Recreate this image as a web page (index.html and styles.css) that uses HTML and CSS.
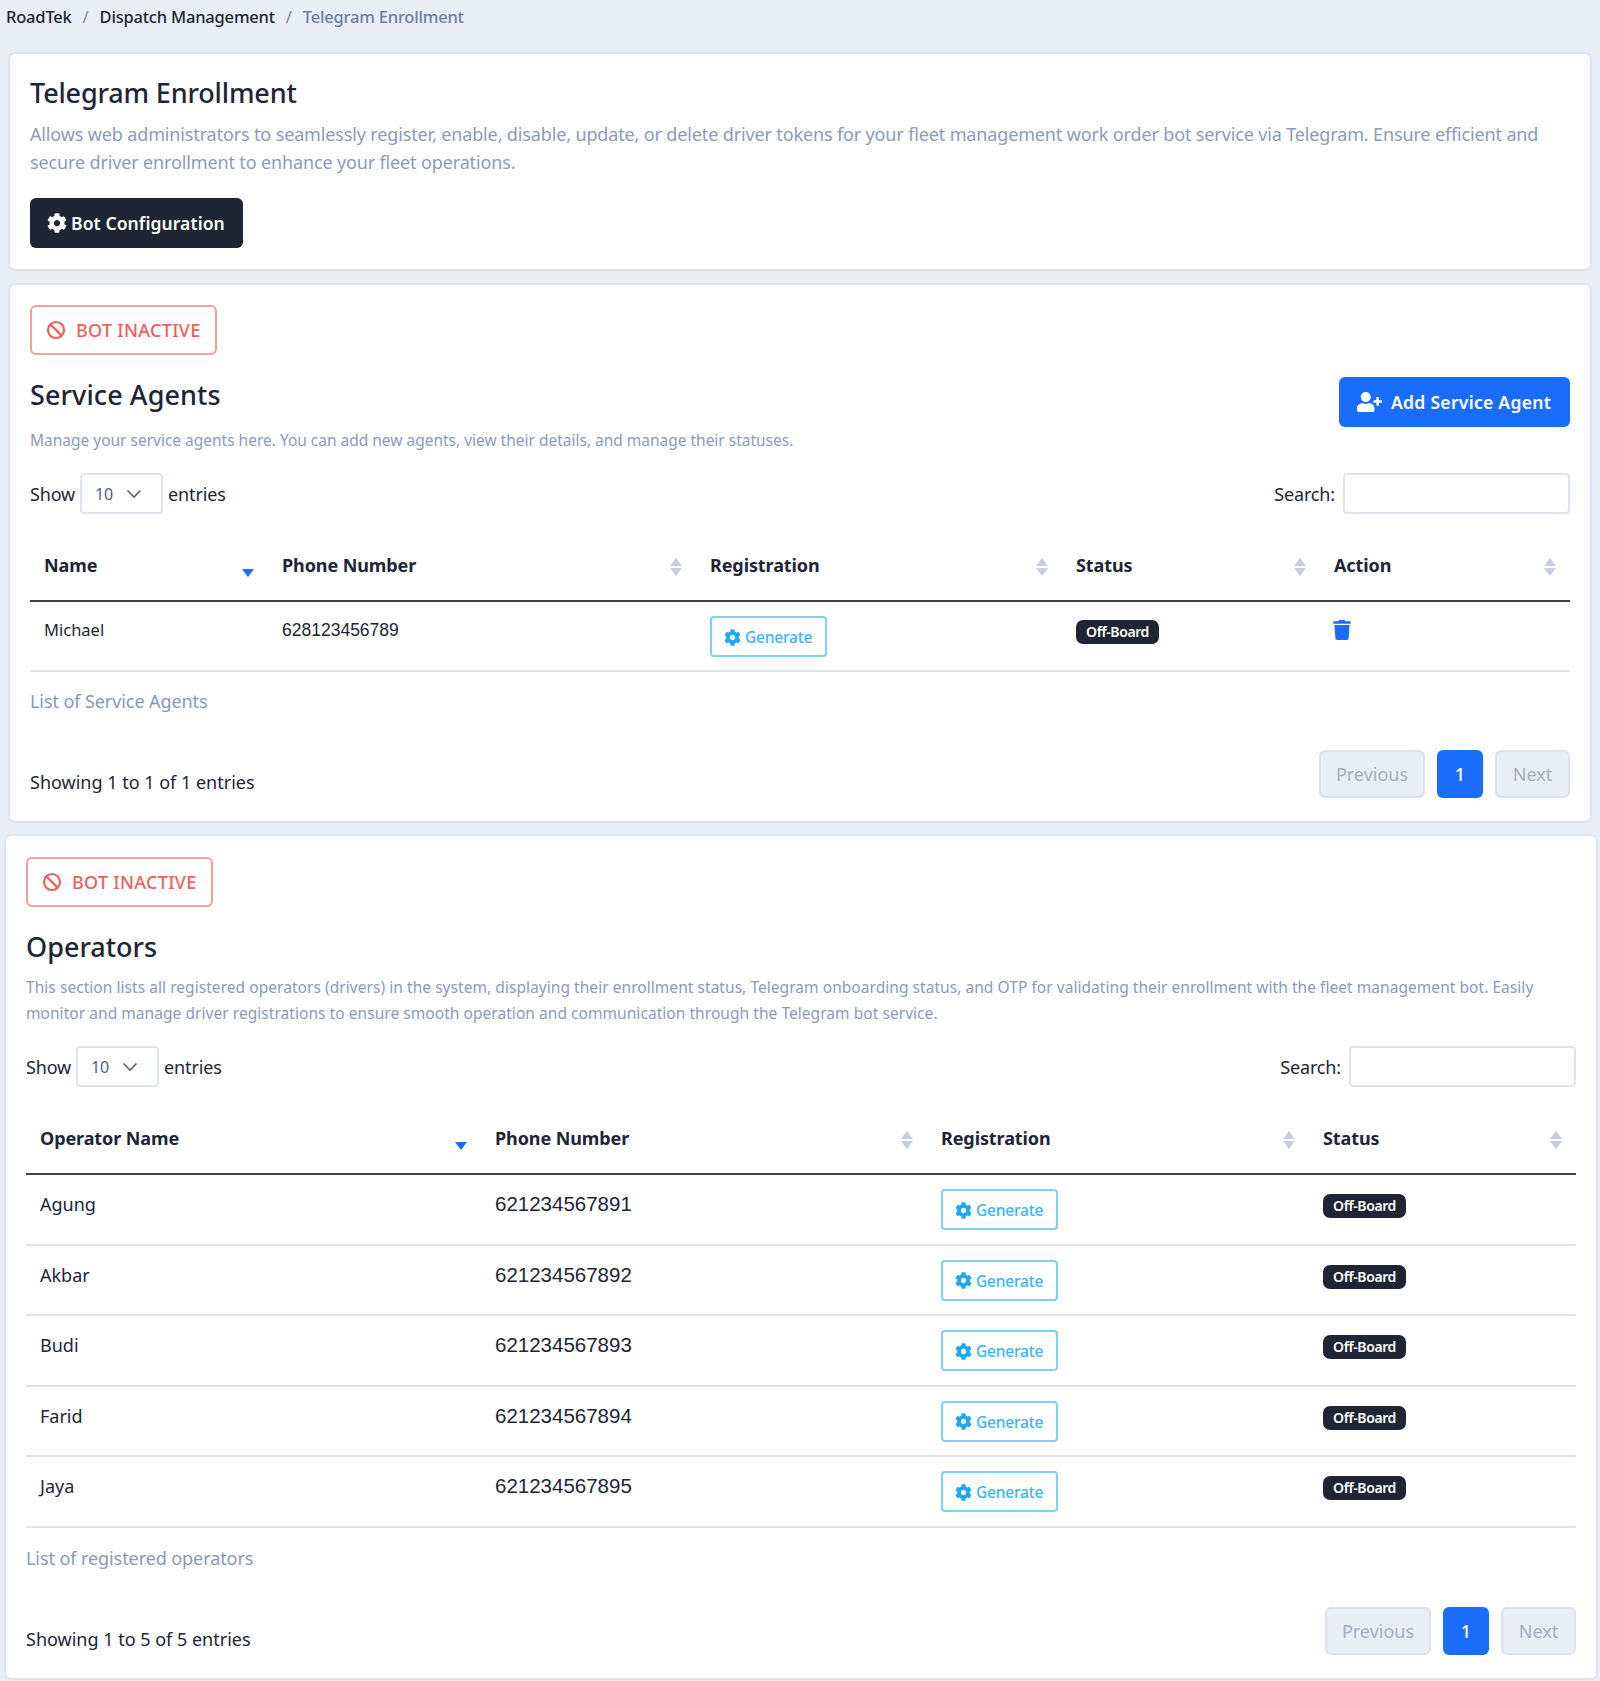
FILE: index.html
```html
<!DOCTYPE html>
<html lang="en">
<head>
<meta charset="utf-8">
<title>Telegram Enrollment</title>
<link rel="stylesheet" href="styles.css">
</head>
<body>
<svg class="defs" width="0" height="0" aria-hidden="true">
  <symbol id="i-cog" viewBox="0 0 512 512"><path d="M487.4 315.7l-42.6-24.6c4.3-23.2 4.3-47 0-70.2l42.6-24.6c4.9-2.8 7.1-8.6 5.5-14-11.1-35.6-30-67.8-54.7-94.6-3.8-4.1-10-5.1-14.8-2.3L380.8 110c-17.9-15.4-38.5-27.3-60.8-35.1V25.8c0-5.6-3.9-10.5-9.4-11.7-36.7-8.2-74.3-7.8-109.2 0-5.5 1.2-9.4 6.1-9.4 11.7V75c-22.2 7.9-42.8 19.8-60.8 35.1L88.7 85.5c-4.9-2.8-11-1.9-14.8 2.3-24.7 26.7-43.6 58.9-54.7 94.6-1.7 5.4.6 11.2 5.5 14L67.3 221c-4.3 23.2-4.3 47 0 70.2l-42.6 24.6c-4.9 2.8-7.1 8.6-5.5 14 11.1 35.6 30 67.8 54.7 94.6 3.8 4.1 10 5.1 14.8 2.3l42.6-24.6c17.9 15.4 38.5 27.3 60.8 35.1v49.2c0 5.6 3.9 10.5 9.4 11.7 36.7 8.2 74.3 7.8 109.2 0 5.5-1.2 9.4-6.1 9.4-11.7v-49.2c22.2-7.9 42.8-19.8 60.8-35.1l42.6 24.6c4.9 2.8 11 1.9 14.8-2.3 24.7-26.7 43.6-58.9 54.7-94.6 1.5-5.5-.7-11.3-5.6-14.1zM256 336c-44.1 0-80-35.9-80-80s35.9-80 80-80 80 35.9 80 80-35.9 80-80 80z"/></symbol>
  <symbol id="i-user" viewBox="0 0 640 512"><path d="M624 208h-64v-64c0-8.8-7.2-16-16-16h-32c-8.8 0-16 7.2-16 16v64h-64c-8.8 0-16 7.2-16 16v32c0 8.8 7.2 16 16 16h64v64c0 8.8 7.2 16 16 16h32c8.8 0 16-7.2 16-16v-64h64c8.8 0 16-7.2 16-16v-32c0-8.8-7.2-16-16-16zm-400 48c70.7 0 128-57.3 128-128S294.7 0 224 0 96 57.3 96 128s57.3 128 128 128zm89.6 32h-16.7c-22.2 10.2-46.9 16-72.9 16s-50.6-5.8-72.9-16h-16.7C60.2 288 0 348.2 0 422.4V464c0 26.5 21.5 48 48 48h352c26.5 0 48-21.5 48-48v-41.6c0-74.2-60.2-134.4-134.4-134.4z"/></symbol>
  <symbol id="i-trash" viewBox="0 0 448 512"><path d="M432 32H312l-9.4-18.7A24 24 0 0 0 281.1 0H166.8a23.72 23.72 0 0 0-21.4 13.3L136 32H16A16 16 0 0 0 0 48v32a16 16 0 0 0 16 16h416a16 16 0 0 0 16-16V48a16 16 0 0 0-16-16zM53.2 467a48 48 0 0 0 47.9 45h245.8a48 48 0 0 0 47.9-45L416 128H32z"/></symbol>
  <symbol id="i-ban" viewBox="0 0 20 20"><circle cx="10" cy="10" r="8" fill="none" stroke="currentColor" stroke-width="2.2"/><path d="M4.4 4.4l11.2 11.2" fill="none" stroke="currentColor" stroke-width="2.2"/></symbol>
  <symbol id="i-sort" viewBox="0 0 14 18"><path d="M7 0l6 8H1z"/><path d="M1 10h12l-6 8z"/></symbol>
  <symbol id="i-sort-desc" viewBox="0 0 14 18"><path d="M1 10h12l-6 8z"/></symbol>
  <symbol id="i-chev" viewBox="0 0 16 10"><path d="M1.5 1.5L8 8l6.5-6.5" fill="none" stroke="currentColor" stroke-width="1.6"/></symbol>
</svg>

<nav class="crumbs">
  <span>RoadTek</span><span class="sep">/</span><span>Dispatch Management</span><span class="sep">/</span><span class="here">Telegram Enrollment</span>
</nav>

<section class="card card-intro">
  <h2 class="title">Telegram Enrollment</h2>
  <p class="lead">Allows web administrators to seamlessly register, enable, disable, update, or delete driver tokens for your fleet management work order bot service via Telegram. Ensure efficient and secure driver enrollment to enhance your fleet operations.</p>
  <button class="btn btn-dark"><svg class="ico"><use href="#i-cog"/></svg>Bot Configuration</button>
</section>

<section class="card card-agents">
  <div class="status-off"><svg class="ico-ban"><use href="#i-ban"/></svg>BOT INACTIVE</div>
  <div class="head-row">
    <div>
      <h2 class="title title-agents">Service Agents</h2>
      <p class="desc">Manage your service agents here. You can add new agents, view their details, and manage their statuses.</p>
    </div>
    <button class="btn btn-blue"><svg class="ico-user"><use href="#i-user"/></svg>Add Service Agent</button>
  </div>
  <div class="controls">
    <label class="len">Show <span class="select"><span>10</span><svg class="chev"><use href="#i-chev"/></svg></span> entries</label>
    <label class="search">Search: <input class="search-input" type="text"></label>
  </div>
  <table class="grid grid-agents">
    <colgroup><col class="a1"><col class="a2"><col class="a3"><col class="a4"><col class="a5"></colgroup>
    <thead>
      <tr>
        <th><div class="th"><span>Name</span><svg class="sort sort-on"><use href="#i-sort-desc"/></svg></div></th>
        <th><div class="th"><span>Phone Number</span><svg class="sort"><use href="#i-sort"/></svg></div></th>
        <th><div class="th"><span>Registration</span><svg class="sort"><use href="#i-sort"/></svg></div></th>
        <th><div class="th"><span>Status</span><svg class="sort"><use href="#i-sort"/></svg></div></th>
        <th><div class="th"><span>Action</span><svg class="sort"><use href="#i-sort"/></svg></div></th>
      </tr>
    </thead>
    <tbody>
      <tr>
        <td>Michael</td><td class="num">628123456789</td>
        <td><button class="gen"><svg class="ico-gen"><use href="#i-cog"/></svg>Generate</button></td>
        <td><span class="pill">Off-Board</span></td>
        <td><svg class="ico-trash"><use href="#i-trash"/></svg></td>
      </tr>
    </tbody>
  </table>
  <div class="caption">List of Service Agents</div>
  <div class="foot">
    <div class="info">Showing 1 to 1 of 1 entries</div>
    <div class="pager"><span class="pg pg-off">Previous</span><span class="pg pg-on">1</span><span class="pg pg-off pg-next">Next</span></div>
  </div>
</section>

<section class="card card-ops">
  <div class="status-off"><svg class="ico-ban"><use href="#i-ban"/></svg>BOT INACTIVE</div>
  <h2 class="title title-ops">Operators</h2>
  <p class="desc desc-ops">This section lists all registered operators (drivers) in the system, displaying their enrollment status, Telegram onboarding status, and OTP for validating their enrollment with the fleet management bot. Easily monitor and manage driver registrations to ensure smooth operation and communication through the Telegram bot service.</p>
  <div class="controls controls-ops">
    <label class="len">Show <span class="select"><span>10</span><svg class="chev"><use href="#i-chev"/></svg></span> entries</label>
    <label class="search">Search: <input class="search-input" type="text"></label>
  </div>
  <table class="grid grid-ops">
    <colgroup><col class="o1"><col class="o2"><col class="o3"><col class="o4"></colgroup>
    <thead>
      <tr>
        <th><div class="th"><span>Operator Name</span><svg class="sort sort-on"><use href="#i-sort-desc"/></svg></div></th>
        <th><div class="th"><span>Phone Number</span><svg class="sort"><use href="#i-sort"/></svg></div></th>
        <th><div class="th"><span>Registration</span><svg class="sort"><use href="#i-sort"/></svg></div></th>
        <th><div class="th"><span>Status</span><svg class="sort"><use href="#i-sort"/></svg></div></th>
      </tr>
    </thead>
    <tbody>
      <tr><td>Agung</td><td class="num">621234567891</td><td><button class="gen"><svg class="ico-gen"><use href="#i-cog"/></svg>Generate</button></td><td><span class="pill">Off-Board</span></td></tr>
      <tr><td>Akbar</td><td class="num">621234567892</td><td><button class="gen"><svg class="ico-gen"><use href="#i-cog"/></svg>Generate</button></td><td><span class="pill">Off-Board</span></td></tr>
      <tr><td>Budi</td><td class="num">621234567893</td><td><button class="gen"><svg class="ico-gen"><use href="#i-cog"/></svg>Generate</button></td><td><span class="pill">Off-Board</span></td></tr>
      <tr><td>Farid</td><td class="num">621234567894</td><td><button class="gen"><svg class="ico-gen"><use href="#i-cog"/></svg>Generate</button></td><td><span class="pill">Off-Board</span></td></tr>
      <tr><td>Jaya</td><td class="num">621234567895</td><td><button class="gen"><svg class="ico-gen"><use href="#i-cog"/></svg>Generate</button></td><td><span class="pill">Off-Board</span></td></tr>
    </tbody>
  </table>
  <div class="caption caption-ops">List of registered operators</div>
  <div class="foot foot-ops">
    <div class="info">Showing 1 to 5 of 5 entries</div>
    <div class="pager"><span class="pg pg-off">Previous</span><span class="pg pg-on">1</span><span class="pg pg-off pg-next">Next</span></div>
  </div>
</section>
</body>
</html>
```

FILE: styles.css
```css
* { box-sizing: border-box; }
html, body { margin: 0; padding: 0; }
body {
  background: #e9edf5;
  color: #1f2535;
  font-family: "Noto Sans", "Open Sans", sans-serif;
  font-size: 16.5px;
  height: 1681px;
  overflow: hidden;
}
.defs { position: absolute; }
.crumbs {
  display: flex;
  align-items: center;
  height: 33px;
  padding-left: 6px;
  margin-bottom: 19px;
  gap: 11px;
  font-size: 16.5px;
  font-weight: 500;
  letter-spacing: -0.2px;
  color: #1f2535;
}
.crumbs .sep { color: #7b88a1; font-weight: 400; }
.crumbs .here { color: #6c7fa3; }

.card {
  background: #fff;
  border: 2px solid #e0e4ed;
  border-radius: 7px;
  padding: 20px;
}
.card-intro { margin: 0 8px 12px; height: 219px; }
.card-agents { margin: 0 8px 11px; height: 540px; }
.card-ops { margin: 0 2px 0 4px; height: 846px; padding-top: 21px; }

.title {
  margin: -1px 0 0;
  font-size: 27px;
  font-weight: 500;
  line-height: 40px;
  letter-spacing: -0.15px;
  color: #1f2535;
}
.lead {
  margin: 7px 0 22px;
  font-size: 18px;
  line-height: 28px;
  letter-spacing: -0.14px;
  color: #8c9bb8;
}
.btn {
  display: inline-flex;
  align-items: center;
  height: 50px;
  border: 0;
  border-radius: 6px;
  font-family: inherit;
  font-size: 17.5px;
  font-weight: 600;
  color: #fff;
  letter-spacing: 0.1px;
}
.btn-dark { background: #1f2535; padding: 0 17px; width: 213px; }
.btn-blue { background: #1a6cfb; padding: 0 18px; width: 231px; flex: none; letter-spacing: 0.3px; }
.ico { width: 20px; height: 20px; fill: currentColor; margin-right: 4px; }
.ico-user { width: 25px; height: 20px; fill: currentColor; margin-right: 9px; }

.status-off {
  display: flex;
  align-items: center;
  width: 187px;
  height: 50px;
  padding-left: 14px;
  border: 2px solid #f39e9e;
  border-radius: 6px;
  color: #ee5f5f;
  font-size: 18px;
  letter-spacing: 0.3px;
  font-weight: 500;
}
.ico-ban { width: 20px; height: 20px; margin-right: 10px; }

.head-row {
  display: flex;
  justify-content: space-between;
  align-items: flex-start;
  margin-top: 22px;
}
.title-agents { margin-top: -2px; letter-spacing: 0.1px; }
.desc {
  margin: 12px 0 0;
  font-size: 15.5px;
  line-height: 26px;
  letter-spacing: -0.01px;
  color: #8c9bb8;
}
.title-ops { margin-top: 20px; letter-spacing: 0; }
.desc-ops { margin-top: 7px; letter-spacing: 0.05px; }

.controls {
  display: flex;
  justify-content: space-between;
  align-items: center;
  margin-top: 20px;
  height: 41px;
  font-size: 18px;
  letter-spacing: -0.15px;
}
.len { display: flex; align-items: center; gap: 5px; }
.select {
  display: flex;
  align-items: center;
  justify-content: space-between;
  width: 83px;
  height: 41px;
  padding: 0 19px 0 13px;
  border: 2px solid #e0e4ed;
  border-radius: 4px;
  background: #fff;
  font-size: 16px;
  color: #55627c;
}
.chev { width: 16px; height: 10px; color: #55627c; }
.search { display: flex; align-items: center; gap: 8px; }
.search-input {
  width: 227px;
  height: 41px;
  border: 2px solid #e0e4ed;
  border-radius: 4px;
  background: #fff;
}

.grid {
  width: 100%;
  table-layout: fixed;
  border-collapse: collapse;
  margin-top: 14px;
}
.a1 { width: 238px; } .a2 { width: 428px; } .a3 { width: 366px; } .a4 { width: 258px; } .a5 { width: 250px; }
.o1 { width: 455px; } .o2 { width: 446px; } .o3 { width: 382px; } .o4 { width: 267px; }
.grid th {
  height: 73px;
  padding: 0 14px;
  border-bottom: 2px solid #3d424f;
  font-size: 18px;
  font-weight: 700;
  text-align: left;
  color: #1f2535;
  letter-spacing: -0.1px;
}
.th { display: flex; justify-content: space-between; align-items: center; margin-top: 2px; }
.sort { width: 14px; height: 18px; fill: #c6cddc; margin-right: -1px; margin-top: 3px; }
.sort.sort-on { fill: #1a6cfb; margin-top: 5px; }
.grid td {
  height: 70px;
  padding: 14px 14px 0;
  border-bottom: 2px solid #e0e4ed;
  vertical-align: top;
  font-size: 16.5px;
  line-height: 28px;
  color: #1f2535;
}
.grid-ops td { height: 70.5px; font-size: 18px; line-height: 31px; }
.grid td.num { font-family: "Liberation Sans", Arial, sans-serif; font-size: 17.5px; }
.grid-ops td.num { font-size: 20.5px; line-height: 29px; }
.gen {
  display: inline-flex;
  align-items: center;
  vertical-align: top;
  width: 117px;
  height: 41px;
  padding: 1px 0 0 12px;
  border: 2px solid #7fd0fa;
  border-radius: 4px;
  background: #fff;
  color: #3db4f5;
  font-family: inherit;
  font-size: 15.5px;
  font-weight: 500;
  letter-spacing: -0.2px;
}
.ico-gen { width: 17px; height: 17px; fill: #1ea7f3; margin-right: 4px; }
.pill {
  display: inline-flex;
  align-items: center;
  justify-content: center;
  width: 83px;
  height: 24px;
  margin-top: 4px;
  border-radius: 7px;
  background: #1f2535;
  color: #fff;
  font-size: 14px;
  font-weight: 600;
  letter-spacing: -0.4px;
  line-height: 1;
}
.ico-trash { display: block; width: 18px; height: 20px; margin: 4px 0 0 -1px; fill: #1a6cfb; }

.caption {
  margin-top: 15px;
  font-size: 18px;
  line-height: 28px;
  letter-spacing: -0.08px;
  color: #8a99b4;
}
.caption-ops { margin-top: 16px; }
.foot {
  display: flex;
  justify-content: space-between;
  align-items: flex-start;
  margin-top: 35px;
}
.foot-ops { margin-top: 35px; }
.info { margin-top: 18px; font-size: 18px; line-height: 28px; }
.pager { display: flex; gap: 12px; }
.pg {
  display: flex;
  align-items: center;
  justify-content: center;
  height: 48px;
  border-radius: 6px;
  font-size: 18px;
}
.pg-off { width: 106px; background: #e9edf5; border: 2px solid #dce1eb; color: #a4aec3; }
.pg-next { width: 75px; }
.pg-on { width: 46px; background: #1a6cfb; color: #fff; font-weight: 500; }
```
